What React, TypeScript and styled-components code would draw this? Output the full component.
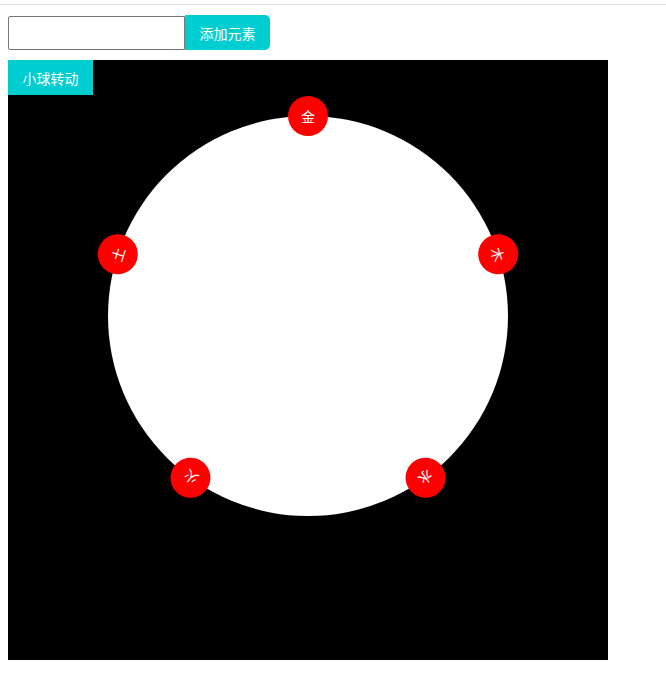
import React, { useState } from 'react'
import styled, { createGlobalStyle } from 'styled-components'

const GlobalStyle = createGlobalStyle`
  html, body {
    margin: 0;
    padding: 0;
    background: #fff;
    font-family: "Microsoft YaHei", "Noto Sans CJK SC", "Noto Sans", sans-serif;
  }
`

const TopRule = styled.div`
  height: 4px;
  border-bottom: 1px solid #dddddd;
`

const Page = styled.div`
  padding: 10px 8px 0 8px;
`

const Toolbar = styled.div`
  display: flex;
  align-items: flex-end;
  margin-bottom: 10px;
`

const TextInput = styled.input`
  box-sizing: border-box;
  width: 177px;
  height: 34px;
  margin: 0;
  padding: 0 6px;
  border: 1px solid #767676;
  border-radius: 2px 0 0 2px;
  font-size: 14px;
  outline: none;
`

const AddButton = styled.button`
  box-sizing: border-box;
  height: 35px;
  width: 85px;
  margin: 0;
  padding: 0;
  border: none;
  border-radius: 0 5px 5px 0;
  background: #00ced1;
  color: #fff;
  font-family: "Microsoft YaHei", "Noto Sans CJK SC", sans-serif;
  font-size: 14px;
  cursor: pointer;
`

const Stage = styled.div`
  width: 600px;
  height: 600px;
  background: #000;
  overflow: hidden;
`

const SpinButton = styled.button`
  display: block;
  box-sizing: border-box;
  width: 85px;
  height: 35px;
  margin: 0;
  padding: 0;
  border: none;
  background: #00ced1;
  color: #fff;
  font-family: "Microsoft YaHei", "Noto Sans CJK SC", sans-serif;
  font-size: 14px;
  cursor: pointer;
`

const Orbit = styled.div<{ $spin: number }>`
  position: relative;
  width: 400px;
  height: 400px;
  margin: 21px 0 0 100px;
  border-radius: 50%;
  background: #fff;
  transform: rotate(${p => p.$spin}deg);
  transition: transform 1s ease;
`

const Ball = styled.div<{ $angle: number }>`
  position: absolute;
  left: 50%;
  top: 50%;
  width: 40px;
  height: 40px;
  margin: -20px 0 0 -20px;
  border-radius: 50%;
  background: #ff0000;
  color: #fff;
  font-size: 14px;
  display: flex;
  align-items: center;
  justify-content: center;
  transform: rotate(${p => p.$angle}deg) translateY(-200px);
`

export default function App() {
  const [items, setItems] = useState(['金', '木', '水', '火', '土'])
  const [text, setText] = useState('')
  const [spin, setSpin] = useState(0)

  const add = () => {
    if (!text.trim()) return
    setItems([...items, text.trim()])
    setText('')
  }

  return (
    <>
      <GlobalStyle />
      <TopRule />
      <Page>
        <Toolbar>
          <TextInput value={text} onChange={e => setText(e.target.value)} />
          <AddButton onClick={add}>添加元素</AddButton>
        </Toolbar>
        <Stage>
          <SpinButton onClick={() => setSpin(spin + 72)}>小球转动</SpinButton>
          <Orbit $spin={spin}>
            {items.map((name, i) => (
              <Ball key={i} $angle={(360 / items.length) * i}>
                {name}
              </Ball>
            ))}
          </Orbit>
        </Stage>
      </Page>
    </>
  )
}
